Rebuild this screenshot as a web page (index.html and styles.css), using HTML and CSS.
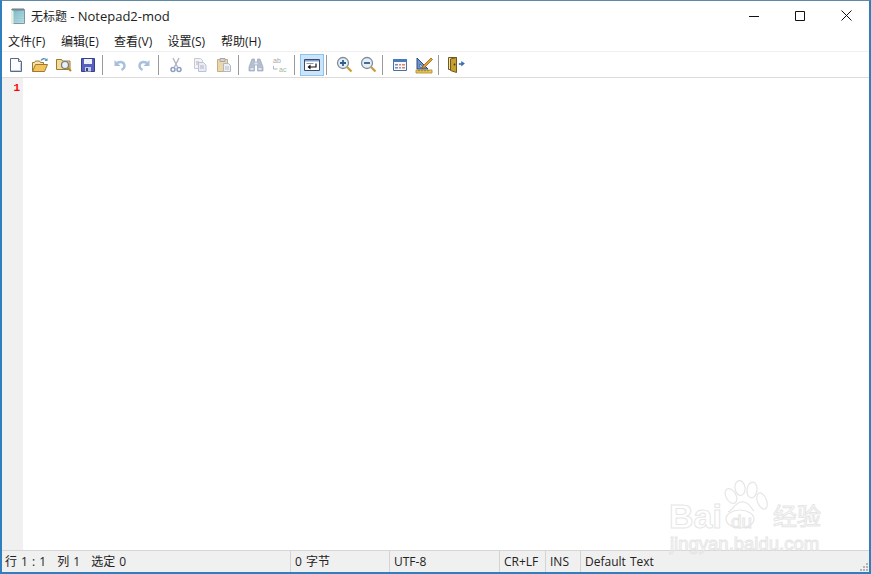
FILE: index.html
```html
<!DOCTYPE html>
<html lang="zh">
<head>
<meta charset="utf-8">
<title>无标题 - Notepad2-mod</title>
<link rel="stylesheet" href="styles.css">
</head>
<body>
<div class="window">
  <header class="titlebar">
    <svg class="app-icon" width="16" height="18" viewBox="0 0 16 18"><defs><linearGradient id="pg" x1="0" y1="0" x2="1" y2="1"><stop offset="0" stop-color="#6fb3c4"/><stop offset="1" stop-color="#c4e4e8"/></linearGradient></defs><path d="M1.500 2.500h13v14h-13z" fill="url(#pg)" stroke="#7d979e"/><path d="M1 3h2.500v14H1z" fill="#e8eee0"/><path d="M4 6.500h10M4 9h10M4 11.500h10M4 14h10" stroke="#8fc4ce" stroke-width=".7"/><path d="M3 1v3M5 1v3M7 1v3M9 1v3M11 1v3M13 1v3" stroke="#6c7a80"/></svg>
    <span class="title">无标题 <span class="title-latin">- Notepad2-mod</span></span>
    <div class="caption">
      <span class="cap-btn"><svg width="10" height="10" viewBox="0 0 10 10"><path d="M0 5.500h10" stroke="#111"/></svg></span>
      <span class="cap-btn"><svg width="10" height="10" viewBox="0 0 10 10"><path d="M.5.500h9v9h-9z" fill="none" stroke="#111"/></svg></span>
      <span class="cap-btn"><svg width="11" height="11" viewBox="0 0 11 11"><path d="M.5.500l10 10M10.500.500l-10 10" stroke="#111"/></svg></span>
    </div>
  </header>
  <nav class="menubar">
    <span class="menu-item">文件(F)</span>
    <span class="menu-item">编辑(E)</span>
    <span class="menu-item">查看(V)</span>
    <span class="menu-item">设置(S)</span>
    <span class="menu-item">帮助(H)</span>
  </nav>
  <div class="toolbar">
    <span class="tool"><svg width="16" height="16" viewBox="0 0 16 16"><path d="M2.500 1.500h8l3 3v10h-11z" fill="#fdfdff" stroke="#5a6a88"/><path d="M10.500 1.500v3h3" fill="#dfe6f2" stroke="#5a6a88"/><path d="M3 13.500h10M12.500 6v8" stroke="#c0cce2"/></svg></span>
    <span class="tool"><svg width="18" height="16" viewBox="0 0 18 16"><path d="M1.500 14.500v-9h2l1-1.500h4l1 1.500h3v3" fill="#f5e3ac" stroke="#9a7a34"/><path d="M1.500 14.500l3-7h12l-3 7z" fill="#f4c45a" stroke="#9a7a34"/><path d="M10 3.500c1-2 4-2.500 5.500-.5" fill="none" stroke="#5a8fbf" stroke-width="1.300"/><path d="M16.500 1v3h-3z" fill="#5a8fbf"/></svg></span>
    <span class="tool"><svg width="17" height="16" viewBox="0 0 17 16"><path d="M.500 12.500v-10h5l1 1.500h7.500v8.500z" fill="#f5dc95" stroke="#9a7a34"/><circle cx="9" cy="8" r="3.500" fill="#e6f0f8" stroke="#6c7a88" stroke-width="1.200"/><path d="M11.500 10.500l3.500 3.500" stroke="#b78a2c" stroke-width="2.200"/></svg></span>
    <span class="tool"><svg width="16" height="16" viewBox="0 0 16 16"><path d="M1.500 1.500h13v13h-13z" fill="#5560c0" stroke="#36408c"/><path d="M4 2h8v5H4z" fill="#eef0fa"/><path d="M5 10h6v4.500H5z" fill="#c8cce0"/><path d="M6 11h2v3H6z" fill="#36408c"/></svg></span>
    <span class="sep"></span>
    <span class="tool"><svg width="16" height="16" viewBox="0 0 16 16"><path d="M4 7.500c2-3.500 8-3.500 8.500 1 .2 2-1 3.500-3 4.500" fill="none" stroke="#a9c0dc" stroke-width="2.400"/><path d="M2.500 3v6h6z" fill="#a9c0dc"/></svg></span>
    <span class="tool"><svg width="16" height="16" viewBox="0 0 16 16"><path d="M12 7.500c-2-3.500-8-3.500-8.500 1-.2 2 1 3.500 3 4.500" fill="none" stroke="#a9c0dc" stroke-width="2.400"/><path d="M13.500 3v6h-6z" fill="#a9c0dc"/></svg></span>
    <span class="sep"></span>
    <span class="tool"><svg width="16" height="16" viewBox="0 0 16 16"><path d="M5 1l4.500 9M11 1L6.500 10" stroke="#b0b6c0" stroke-width="1.400" fill="none"/><circle cx="5" cy="12.500" r="2" fill="none" stroke="#8f9fc4" stroke-width="1.500"/><circle cx="11" cy="12.500" r="2" fill="none" stroke="#8f9fc4" stroke-width="1.500"/></svg></span>
    <span class="tool"><svg width="16" height="16" viewBox="0 0 16 16"><path d="M2.500 1.500h6l2 2v8h-8z" fill="#f3f3f6" stroke="#c3c9d6"/><path d="M6.500 5.500h5l2.500 2.500v6.500H6.500z" fill="#e6edf8" stroke="#b6c4dc"/><path d="M4 5h3M4 7h2M8 9h4M8 11h4" stroke="#d0a8a8"/></svg></span>
    <span class="tool"><svg width="16" height="16" viewBox="0 0 16 16"><path d="M1.500 2.500h10v12h-10z" fill="#ecd7a8" stroke="#c6ae84"/><path d="M4 1.500h5v3H4z" fill="#cfd2d8" stroke="#a8a8a8"/><path d="M7.500 6.500h5l2 2v6h-7z" fill="#eceff4" stroke="#b0b6c2"/><path d="M9 10h4M9 12h4" stroke="#b8bec8"/></svg></span>
    <span class="sep"></span>
    <span class="tool"><svg width="16" height="16" viewBox="0 0 16 16"><path d="M4 2h2.500v3h3V2H12l3 8v4h-5.500V8h-3v6H1v-4z" fill="#b3bfd0" stroke="#9aa6b8" stroke-width=".7"/><path d="M6.500 5.500h3v2h-3z" fill="#e2e6ee"/><path d="M2.500 11h3v2h-3zM10.500 11h3v2h-3z" fill="#dfe5ef"/></svg></span>
    <span class="tool"><svg width="16" height="16" viewBox="0 0 16 16"><text class="mini" x="1" y="6" fill="#a8a8a8">ab</text><text class="mini" x="7" y="15" fill="#9fb89f">ac</text><path d="M1.500 9v3h4" fill="none" stroke="#a8b4c8"/></svg></span>
    <span class="sep"></span>
    <span class="tool tool-on"><svg width="16" height="16" viewBox="0 0 16 16"><path d="M.500 2.500h15v11H.500z" fill="#fff" stroke="#3a4a68"/><path d="M1 3h14v1.500H1z" fill="#7f9fd0"/><path d="M12 6.500V10H6" fill="none" stroke="#111" stroke-width="1.200"/><path d="M6.500 7.500v5L3.500 10z" fill="#111"/><path d="M2.500 6.500h7" stroke="#8c98ac"/></svg></span>
    <span class="sep"></span>
    <span class="tool"><svg width="17" height="17" viewBox="0 0 17 17"><circle cx="7" cy="7" r="5.500" fill="#e6eef6" stroke="#7e8d9c" stroke-width="1.300"/><path d="M4 7h6M7 4v6" stroke="#2f5f90" stroke-width="1.800"/><path d="M11 11l4.500 4.500" stroke="#c9a040" stroke-width="2.400"/></svg></span>
    <span class="tool"><svg width="17" height="17" viewBox="0 0 17 17"><circle cx="7" cy="7" r="5.500" fill="#e6eef6" stroke="#7e8d9c" stroke-width="1.300"/><path d="M4 7h6" stroke="#2f5f90" stroke-width="1.800"/><path d="M11 11l4.500 4.500" stroke="#c9a040" stroke-width="2.400"/></svg></span>
    <span class="sep"></span>
    <span class="tool"><svg width="16" height="16" viewBox="0 0 16 16"><path d="M1.500 2.500h13v11h-13z" fill="#f6f8fc" stroke="#4a70a8"/><path d="M1 2h14v3H1z" fill="#4a7abc"/><path d="M3 7h3v1.500H3zM3 10h3v1.500H3z" fill="#7090c0"/><path d="M7 7h2v1.500H7zM10 7h3v1.500h-3zM7 10h2v1.500H7zM10 10h3v1.500h-3z" fill="#d08a70"/></svg></span>
    <span class="tool"><svg width="18" height="18" viewBox="0 0 18 18"><path d="M2 2v11h11z" fill="#6d94c8" stroke="#2c4a80"/><path d="M5 8v3h3z" fill="#fff" stroke="#2c4a80" stroke-width=".6"/><path d="M8 10L16 2l1.500 1.500-8 8-2.500 1z" fill="#e8a030" stroke="#8a5a10" stroke-width=".7"/><path d="M1 14h16v3H1z" fill="#edc95a" stroke="#a8862a" stroke-width=".8"/><path d="M4 14v1.500M7 14v1.500M10 14v1.500M13 14v1.500" stroke="#7a6018" stroke-width=".8"/></svg></span>
    <span class="sep"></span>
    <span class="tool"><svg width="18" height="17" viewBox="0 0 18 17"><path d="M1.500 1.500h8v12h-8z" fill="#efe2a8" stroke="#6e5a20"/><path d="M3.500 3l6-1.500v15l-6-2z" fill="#c8a030" stroke="#6e5a20"/><circle cx="7.500" cy="8.500" r=".9" fill="#4a3810"/><path d="M12 7.500h2.500V5.500L17.500 7.500 14.500 10V8.500H12z" fill="#2f6fc0" stroke="#1f4a90" stroke-width=".4"/></svg></span>
  </div>
  <main class="editor">
    <div class="gutter"><span class="line-no">1</span></div>
    <div class="text-area"></div>
    <div class="watermark">
      <svg class="paw" width="48" height="50" viewBox="0 0 48 50"><g fill="none" stroke="#e6e6e6" stroke-width="1.200"><ellipse cx="9" cy="16" rx="5" ry="8" transform="rotate(-30 9 16)"/><ellipse cx="18" cy="8" rx="5" ry="7.500" transform="rotate(-8 18 8)"/><ellipse cx="30" cy="10" rx="5" ry="8" transform="rotate(8 30 10)"/><ellipse cx="40" cy="21" rx="4.500" ry="8.500" transform="rotate(-22 40 21)"/><path d="M6 32c4-1 7-9 13-10 7-1 9 5 13 9"/><ellipse cx="18" cy="39" rx="14" ry="9"/></g></svg>
      <span class="wm-bai">Bai</span>
      <span class="wm-du">du</span>
      <span class="wm-cn">经验</span>
      <span class="wm-url">jingyan.baidu.com</span>
    </div>
  </main>
  <footer class="statusbar">
    <span class="cell cell-pos"><span>行 1 : 1</span><span>列 1</span><span>选定 0</span></span>
    <span class="cell cell-size">0 字节</span>
    <span class="cell cell-enc">UTF-8</span>
    <span class="cell cell-eol">CR+LF</span>
    <span class="cell cell-ins">INS</span>
    <span class="cell cell-lex">Default Text</span>
    <svg class="grip" width="10" height="10" viewBox="0 0 10 10"><path d="M7 1h2v2H7zM4 4h2v2H4zM7 4h2v2H7zM1 7h2v2H1zM4 7h2v2H4zM7 7h2v2H7z" fill="#b4b4b4"/></svg>
  </footer>
</div>
</body>
</html>
```
FILE: styles.css
```css
* { box-sizing: border-box; }
html, body { margin: 0; height: 100%; overflow: hidden; }
body { background: #fff; font-family: "Open Sans", "Noto Sans CJK SC", sans-serif; font-size: 12px; color: #111; }

.window {
  width: 871px; height: 574px;
  display: flex; flex-direction: column;
  border: 2px solid #2f7fbe;
  border-top: 1px solid #5d8aa8;
  background: #fff;
}

.titlebar { height: 29px; flex: none; display: flex; align-items: center; padding-left: 8px; }
.app-icon { flex: none; margin-right: 5px; }
.title { flex: 1; font-size: 12px; color: #222; }
.title-latin { font-size: 13px; }
.caption { display: flex; align-self: stretch; }
.cap-btn { width: 46px; display: flex; align-items: center; justify-content: center; }

.menubar { height: 22px; flex: none; display: flex; align-items: center; border-bottom: 1px solid #f0f0f0; }
.menu-item { padding: 0 6px; width: 53px; white-space: nowrap; color: #1a1a1a; }
.menu-item:nth-child(n+3) { width: 53.500px; }

.toolbar { height: 26px; flex: none; display: flex; align-items: center; padding-left: 2px; border-bottom: 1px solid #dcdcdc; }
.tool { width: 24px; height: 22px; flex: none; display: flex; align-items: center; justify-content: center; border: 1px solid transparent; }
.tool-on { background: #cce4f7; border-color: #8ec5f0; }
.sep { width: 8px; height: 20px; flex: none; padding-left: 2px; }
.sep::before { content: ""; display: block; width: 1px; height: 100%; background: #9a9a9a; }
.mini { font: 7px "Liberation Sans", sans-serif; }

.editor { flex: 1; min-height: 0; display: flex; position: relative; background: #fff; }
.gutter { width: 21px; flex: none; background: #f0f0f0; text-align: right; padding: 0 3px 0 0; }
.line-no { font: bold 11px/13px "Liberation Mono", monospace; color: #f00; }
.text-area { flex: 1; }

.watermark { position: absolute; right: 0; bottom: 0; width: 200px; height: 100px; z-index: 1; pointer-events: none; }
.watermark span { position: absolute; color: transparent; -webkit-text-stroke: 1px #e6e6e6; font-family: "Liberation Sans", sans-serif; white-space: nowrap; }
.paw { position: absolute; left: 53px; top: 30px; }
.watermark .wm-bai { left: 0; top: 47px; font-size: 34px; font-weight: bold; }
.watermark .wm-du { left: 62px; top: 61px; font-size: 19px; }
.watermark .wm-cn { left: 104px; top: 49px; font-size: 24px; font-family: "Noto Sans CJK SC", sans-serif; line-height: 32px; }
.watermark .wm-url { left: 1px; top: 83px; font-size: 18.500px; }

.statusbar { height: 22px; flex: none; display: flex; align-items: center; position: relative; background: #f0f0f0; border-top: 1px solid #d6d6d6; color: #222; }
.cell { height: 100%; flex: none; display: flex; align-items: center; padding: 0 0 1px 4px; border-right: 1px solid #d4d4d4; white-space: nowrap; word-spacing: 1px; }
.cell-pos { width: 289px; padding-left: 3px; gap: 11px; }
.cell-size { width: 99px; }
.cell-enc { width: 110px; }
.cell-eol { width: 46px; }
.cell-ins { width: 35px; }
.cell-lex { flex: 1; border-right: 0; }
.grip { position: absolute; right: 0; bottom: 0; }
```
